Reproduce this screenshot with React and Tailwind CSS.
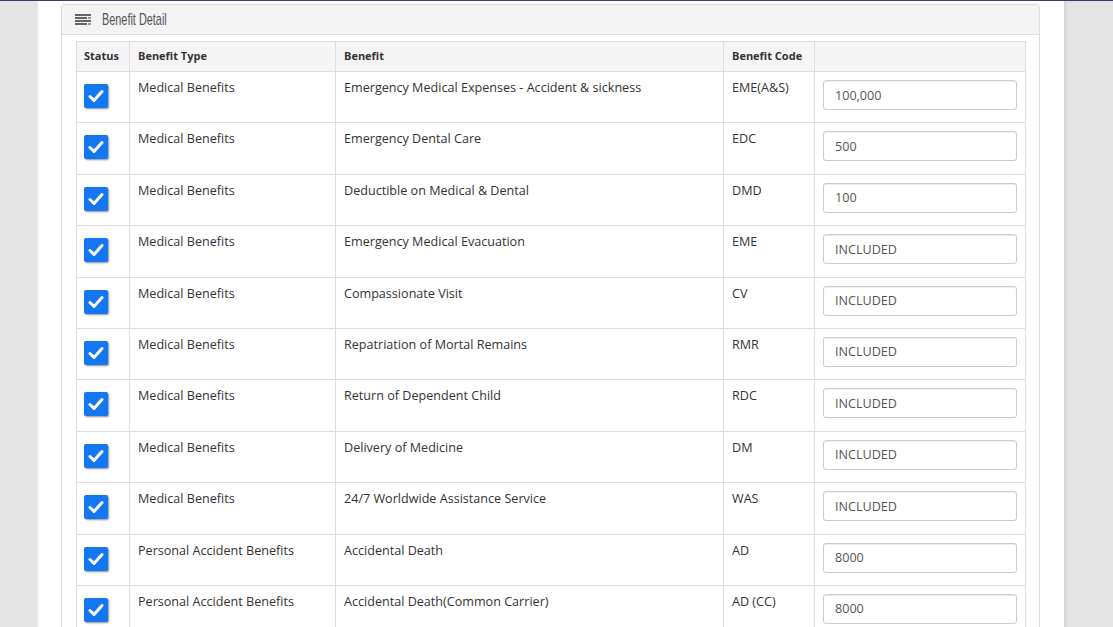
import React from 'react'

const rows = [
  { type: 'Medical Benefits', benefit: 'Emergency Medical Expenses - Accident & sickness', code: 'EME(A&S)', value: '100,000' },
  { type: 'Medical Benefits', benefit: 'Emergency Dental Care', code: 'EDC', value: '500' },
  { type: 'Medical Benefits', benefit: 'Deductible on Medical & Dental', code: 'DMD', value: '100' },
  { type: 'Medical Benefits', benefit: 'Emergency Medical Evacuation', code: 'EME', value: 'INCLUDED' },
  { type: 'Medical Benefits', benefit: 'Compassionate Visit', code: 'CV', value: 'INCLUDED' },
  { type: 'Medical Benefits', benefit: 'Repatriation of Mortal Remains', code: 'RMR', value: 'INCLUDED' },
  { type: 'Medical Benefits', benefit: 'Return of Dependent Child', code: 'RDC', value: 'INCLUDED' },
  { type: 'Medical Benefits', benefit: 'Delivery of Medicine', code: 'DM', value: 'INCLUDED' },
  { type: 'Medical Benefits', benefit: '24/7 Worldwide Assistance Service', code: 'WAS', value: 'INCLUDED' },
  { type: 'Personal Accident Benefits', benefit: 'Accidental Death', code: 'AD', value: '8000' },
  { type: 'Personal Accident Benefits', benefit: 'Accidental Death(Common Carrier)', code: 'AD (CC)', value: '8000' },
]

const PanelIcon = () => (
  <svg width="16" height="11" viewBox="0 0 16 11" className="shrink-0">
    <rect x="0" y="0" width="16" height="2" fill="#666" />
    <rect x="0" y="3" width="12" height="2" fill="#666" />
    <rect x="13" y="3" width="3" height="2" fill="#999" />
    <rect x="0" y="6" width="16" height="2" fill="#666" />
    <rect x="0" y="9" width="12" height="2" fill="#666" />
    <rect x="13" y="9" width="3" height="2" fill="#999" />
  </svg>
)

const Checkbox = () => (
  <div className="w-6 h-6 bg-[#1477f2] rounded-[2px] shadow-[1px_1px_2px_rgba(0,0,0,0.45)] flex items-center justify-center">
    <svg width="16" height="14" viewBox="0 0 16 14">
      <path d="M2 7.5 L6 11.5 L14 2.5" stroke="#fff" strokeWidth="3" fill="none" strokeLinecap="round" strokeLinejoin="round" />
    </svg>
  </div>
)

const cell = 'border border-[#ddd] align-top px-[8px] pt-[7px] leading-[18px]'

export default function App() {
  return (
    <div className="h-[627px] overflow-hidden bg-[#e5e5e5] font-['Open_Sans',sans-serif] text-[#333]">
      <div className="h-px bg-[#423b6a]" />
      <div className="flex">
        <div className="w-[38px] shrink-0" />
        <div className="w-[1026px] shrink-0 bg-white pl-[23px] pr-[24px] pt-[3px] min-h-[626px]">
          {/* Panel */}
          <div className="border border-[#ddd] rounded-t-[3px]">
            <div className="h-[30px] bg-[#f3f3f3] border-b border-[#ddd] flex items-center pl-[13px] gap-[11px]">
              <PanelIcon />
              <span className="inline-block origin-left scale-x-[0.64] font-['Liberation_Sans',sans-serif] text-[17px] text-[#555] whitespace-nowrap">
                Benefit Detail
              </span>
            </div>
            <div className="px-[14px] pt-[6px]">
              <table className="w-[949px] border-collapse text-[12.6px] table-fixed">
                <colgroup>
                  <col className="w-[53px]" />
                  <col className="w-[206px]" />
                  <col className="w-[388px]" />
                  <col className="w-[91px]" />
                  <col className="w-[211px]" />
                </colgroup>
                <thead>
                  <tr className="h-[30px] bg-[#f5f5f5]">
                    <th className="border border-[#ddd] text-left px-[7px] text-[11px] font-bold">Status</th>
                    <th className="border border-[#ddd] text-left px-[8px] text-[11px] font-bold">Benefit Type</th>
                    <th className="border border-[#ddd] text-left px-[8px] text-[11px] font-bold">Benefit</th>
                    <th className="border border-[#ddd] text-left px-[8px] text-[11px] font-bold">Benefit Code</th>
                    <th className="border border-[#ddd]" />
                  </tr>
                </thead>
                <tbody>
                  {rows.map((r, i) => (
                    <tr key={i} className="h-[51.4px]">
                      <td className="border border-[#ddd] align-top pl-[7px] pt-[12px]">
                        <Checkbox />
                      </td>
                      <td className={cell}>{r.type}</td>
                      <td className={cell}>{r.benefit}</td>
                      <td className={cell}>{r.code}</td>
                      <td className="border border-[#ddd] align-top px-[8px] pt-[8px]">
                        <input
                          readOnly
                          value={r.value}
                          className="w-[194px] h-[30px] border border-[#ccc] rounded-[3px] px-[11px] text-[12.6px] text-[#555] shadow-[inset_0_1px_1px_rgba(0,0,0,0.075)] outline-none"
                        />
                      </td>
                    </tr>
                  ))}
                </tbody>
              </table>
            </div>
          </div>
        </div>
        <div className="flex-1 shadow-[inset_2px_0_3px_rgba(0,0,0,0.08)]" />
      </div>
    </div>
  )
}
